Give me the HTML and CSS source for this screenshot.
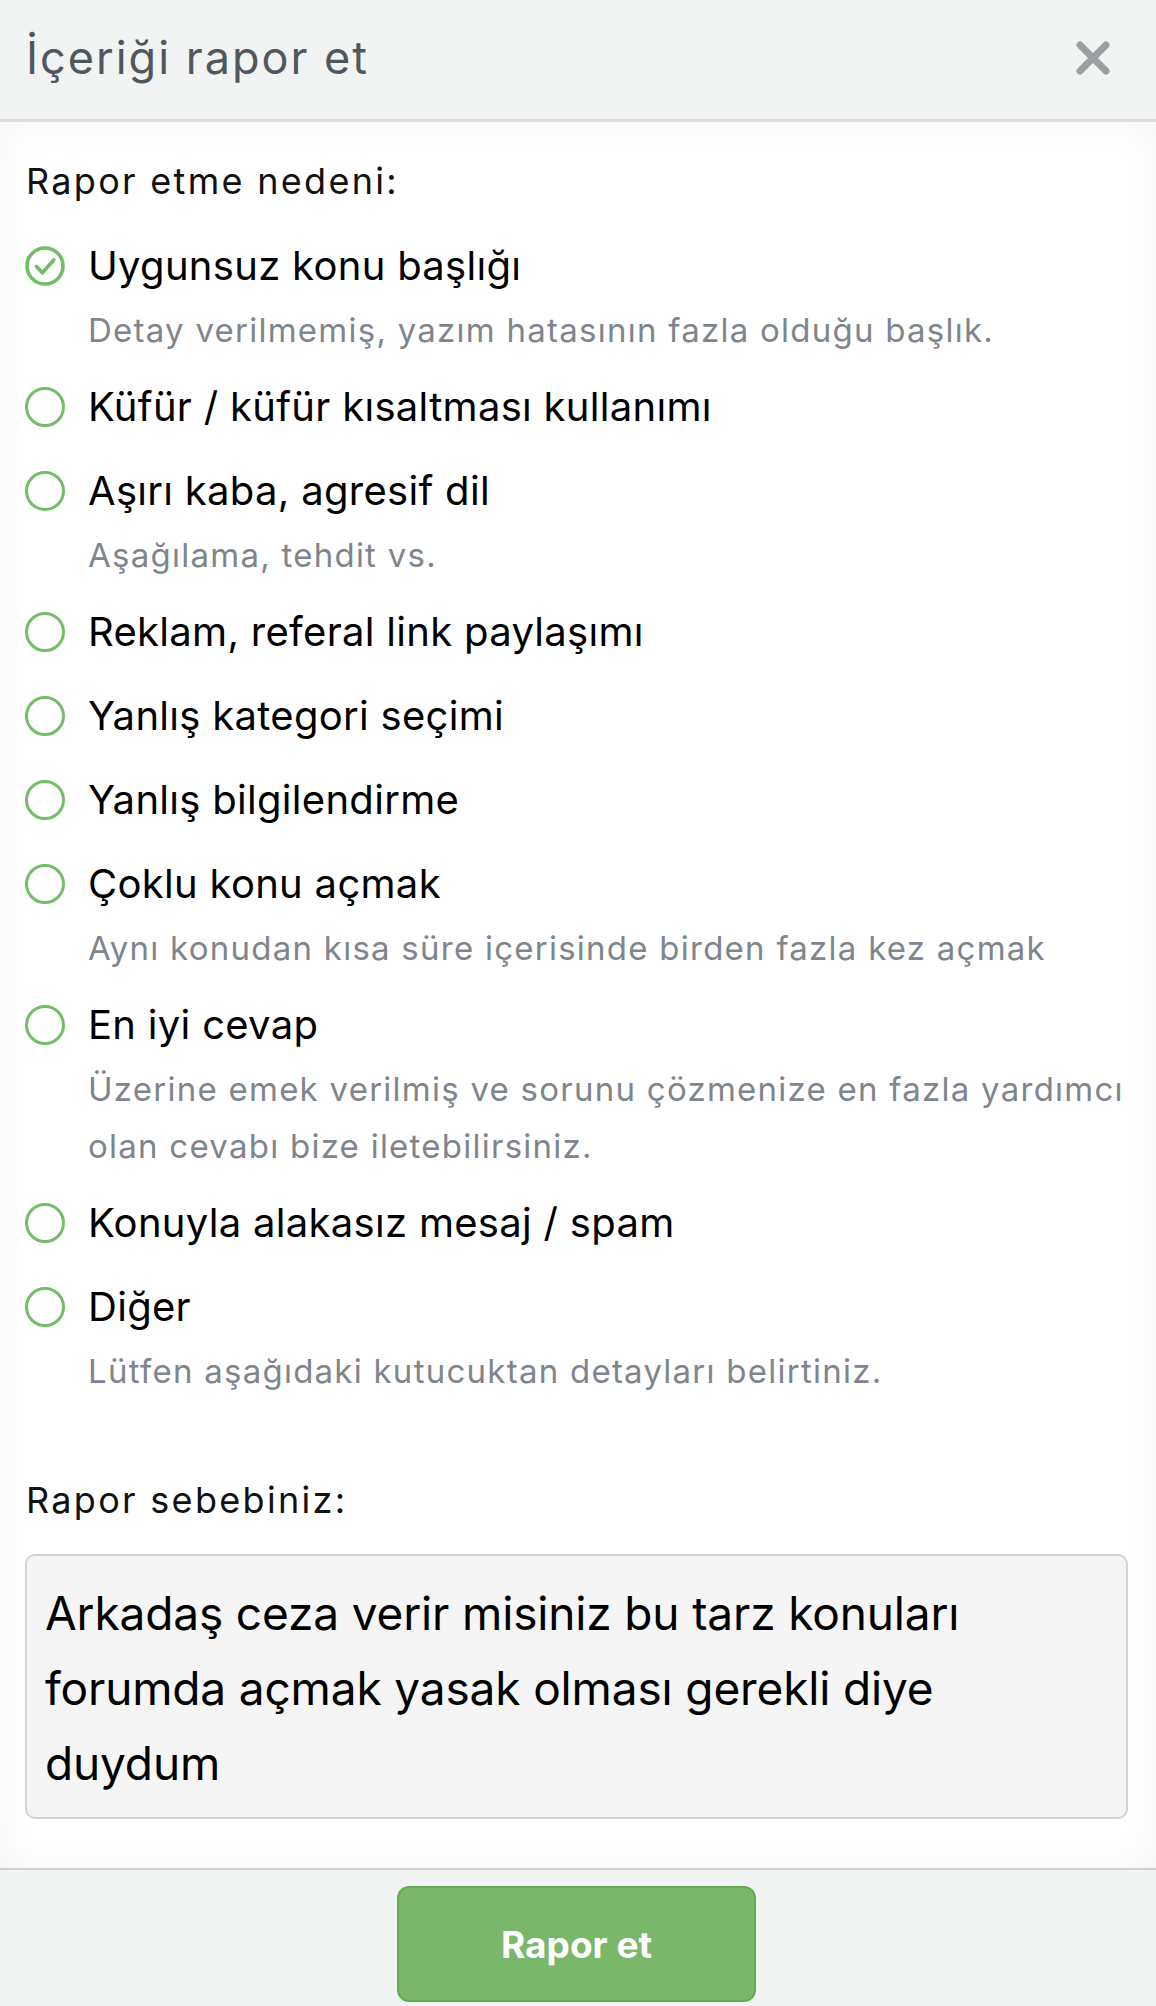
FILE: index.html
```html
<!DOCTYPE html>
<html lang="tr">
<head>
<meta charset="utf-8">
<title>İçeriği rapor et</title>
<link rel="stylesheet" href="styles.css">
</head>
<body>
<div class="modal">
  <header class="modal-header">
    <h1 class="modal-title">İçeriği rapor et</h1>
    <button class="close-btn" aria-label="Kapat">
      <svg width="34" height="34" viewBox="0 0 34 34"><path d="M4 4 L30 30 M30 4 L4 30" stroke="#9b9fa3" stroke-width="7" stroke-linecap="round" fill="none"/></svg>
    </button>
  </header>

  <main class="modal-body">
    <div class="section-label">Rapor etme nedeni:</div>
    <ul class="reasons">
      <li class="reason">
        <span class="radio checked">
          <svg width="40" height="40" viewBox="0 0 40 40"><circle cx="20" cy="20" r="18" fill="none" stroke="#74bd69" stroke-width="3.6"/><path d="M11.5 20.5 L17.3 26.8 L28.8 14" fill="none" stroke="#74bd69" stroke-width="3.8" stroke-linecap="round" stroke-linejoin="round"/></svg>
        </span>
        <div class="reason-text">
          <div class="reason-title">Uygunsuz konu başlığı</div>
          <div class="reason-desc">Detay verilmemiş, yazım hatasının fazla olduğu başlık.</div>
        </div>
      </li>
      <li class="reason">
        <span class="radio"></span>
        <div class="reason-text">
          <div class="reason-title">Küfür / küfür kısaltması kullanımı</div>
        </div>
      </li>
      <li class="reason">
        <span class="radio"></span>
        <div class="reason-text">
          <div class="reason-title">Aşırı kaba, agresif dil</div>
          <div class="reason-desc">Aşağılama, tehdit vs.</div>
        </div>
      </li>
      <li class="reason">
        <span class="radio"></span>
        <div class="reason-text">
          <div class="reason-title">Reklam, referal link paylaşımı</div>
        </div>
      </li>
      <li class="reason">
        <span class="radio"></span>
        <div class="reason-text">
          <div class="reason-title">Yanlış kategori seçimi</div>
        </div>
      </li>
      <li class="reason">
        <span class="radio"></span>
        <div class="reason-text">
          <div class="reason-title">Yanlış bilgilendirme</div>
        </div>
      </li>
      <li class="reason">
        <span class="radio"></span>
        <div class="reason-text">
          <div class="reason-title">Çoklu konu açmak</div>
          <div class="reason-desc">Aynı konudan kısa süre içerisinde birden fazla kez açmak</div>
        </div>
      </li>
      <li class="reason">
        <span class="radio"></span>
        <div class="reason-text">
          <div class="reason-title">En iyi cevap</div>
          <div class="reason-desc">Üzerine emek verilmiş ve sorunu çözmenize en fazla yardımcı olan cevabı bize iletebilirsiniz.</div>
        </div>
      </li>
      <li class="reason">
        <span class="radio"></span>
        <div class="reason-text">
          <div class="reason-title">Konuyla alakasız mesaj / spam</div>
        </div>
      </li>
      <li class="reason">
        <span class="radio"></span>
        <div class="reason-text">
          <div class="reason-title">Diğer</div>
          <div class="reason-desc">Lütfen aşağıdaki kutucuktan detayları belirtiniz.</div>
        </div>
      </li>
    </ul>

    <div class="section-label reason-label">Rapor sebebiniz:</div>
    <div class="textbox">Arkadaş ceza verir misiniz bu tarz konuları<br>forumda açmak yasak olması gerekli diye<br>duydum</div>
  </main>

  <footer class="modal-footer">
    <button class="submit-btn">Rapor et</button>
  </footer>
</div>
</body>
</html>
```

FILE: styles.css
```css
* {
  box-sizing: border-box;
}

html, body {
  margin: 0;
  padding: 0;
  background: #f2f3f3;
}

body {
  font-family: Inter, "Noto Sans", "Liberation Sans", sans-serif;
  color: #000;
}

.modal {
  width: 1156px;
  min-height: 2006px;
  display: flex;
  flex-direction: column;
  background: #f2f3f3;
}

.modal-header {
  height: 122px;
  background: #f2f4f4;
  border-bottom: 3px solid #dedfdf;
  display: flex;
  align-items: center;
  justify-content: space-between;
  padding: 0 46px 0 26px;
}

.modal-title {
  margin: 0 0 4px;
  font-size: 45px;
  font-weight: 400;
  color: #50575d;
  line-height: 54px;
  letter-spacing: 2px;
}

.close-btn {
  border: 0;
  background: transparent;
  padding: 0;
  width: 34px;
  height: 34px;
  margin-top: -4px;
  display: block;
}

.close-btn svg {
  display: block;
}

.modal-body {
  background: #ffffff;
  box-shadow: inset 0 0 40px rgba(0, 0, 0, 0.045);
  padding: 37px 28px 49px 25px;
}

.section-label {
  font-size: 36px;
  line-height: 44px;
  color: #111;
  padding-left: 1px;
  letter-spacing: 2.3px;
}

.reasons {
  list-style: none;
  margin: 35px 0 0;
  padding: 0;
  display: flex;
  flex-direction: column;
  gap: 28px;
}

.reason {
  display: flex;
  align-items: flex-start;
  gap: 23px;
}

.radio {
  flex: none;
  width: 40px;
  height: 40px;
  margin-top: 8px;
  border: 3.6px solid #74bd69;
  border-radius: 50%;
}

.radio.checked {
  border: 0;
}

.radio svg {
  display: block;
}

.reason-text {
  flex: 1;
  min-width: 0;
}

.reason-title {
  font-size: 40px;
  line-height: 56px;
  color: #000;
  letter-spacing: 0.3px;
}

.reason-desc {
  font-size: 33px;
  line-height: 57px;
  color: #7f858c;
  margin: 8px 0 -8px;
  letter-spacing: 1.25px;
}

.reason-label {
  margin-top: 86px;
}

.textbox {
  margin-top: 32px;
  height: 265px;
  border: 2px solid #d3d3d3;
  border-radius: 10px;
  background: #f5f5f5;
  padding: 20px 18px 16px;
  font-size: 46px;
  line-height: 75px;
  color: #000;
  letter-spacing: -0.15px;
}

.modal-footer {
  flex: 1;
  border-top: 2px solid #d2d2d2;
  background: #f2f3f3;
  display: flex;
  justify-content: center;
  align-items: flex-start;
  padding-top: 16px;
}

.submit-btn {
  width: 359px;
  height: 116px;
  background: #79b86b;
  border: 2px solid #67a85a;
  border-radius: 12px;
  color: #fff;
  font-family: Inter, "Noto Sans", "Liberation Sans", sans-serif;
  font-size: 37px;
  font-weight: 700;
  margin-left: -3px;
}
```
